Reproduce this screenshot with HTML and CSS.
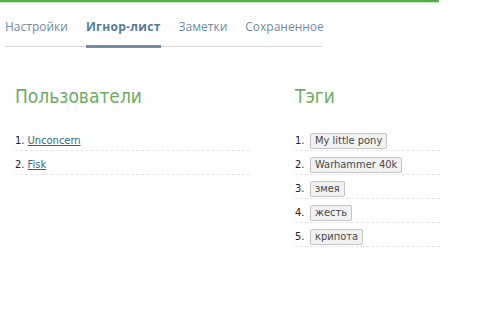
FILE: index.html
```html
<!DOCTYPE html>
<html lang="ru">
<head>
    <meta charset="UTF-8">
    <title>Игнор-лист</title>
    <link rel="stylesheet" href="styles.css">
</head>
<body>
    <div class="topbar"></div>
    <nav class="tabs">
        <a href="#">Настройки</a>
        <a href="#" class="active">Игнор-лист</a>
        <a href="#">Заметки</a>
        <a href="#">Сохраненное</a>
    </nav>

    <div class="columns">
        <div class="users">
            <h2>Пользователи</h2>
            <ol>
                <li><a href="#">Unconcern</a></li>
                <li><a href="#">Fisk</a></li>
            </ol>
        </div>
        <div class="tags">
            <h2>Тэги</h2>
            <ol>
                <li><span class="tag">My little pony</span></li>
                <li><span class="tag">Warhammer 40k</span></li>
                <li><span class="tag">змея</span></li>
                <li><span class="tag">жесть</span></li>
                <li><span class="tag">крипота</span></li>
            </ol>
        </div>
    </div>
</body>
</html>
```

FILE: styles.css
```css
body {
    margin: 0;
    background: #fff;
    font-family: "DejaVu Sans Condensed", "DejaVu Sans", sans-serif;
}

.topbar {
    width: 439px;
    height: 2px;
    background: #5aa552;
    border-bottom: 1px solid #c8e6c2;
}

.tabs {
    display: flex;
    gap: 18px;
    width: 317px;
    margin: 15px 0 0 5px;
    border-bottom: 1px solid #d6d6d6;
    font-family: "Open Sans", sans-serif;
    font-size: 12px;
    white-space: nowrap;
}

.tabs a {
    color: #6d8ca3;
    text-decoration: none;
    padding-bottom: 9px;
    line-height: 18px;
    border-bottom: 3px solid transparent;
    margin-bottom: -2px;
}

.tabs a.active {
    color: #557a96;
    font-weight: bold;
    letter-spacing: 0.3px;
    border-bottom-color: #6d8fa8;
}

.columns {
    display: flex;
    padding: 0 0 0 15px;
    margin-top: 36px;
}

.users {
    width: 235px;
}

.tags {
    width: 145px;
    margin-left: 45px;
}

h2 {
    margin: 0 0 18px;
    font-weight: normal;
    font-size: 19px;
    line-height: 26px;
    color: #6aad66;
}

ol {
    margin: 0;
    padding: 0;
    list-style: none;
    counter-reset: item;
    font-size: 11px;
}

li {
    counter-increment: item;
    height: 19px;
    padding-top: 4px;
    line-height: 19px;
    border-bottom: 1px dashed #e6e6e6;
    color: #222;
}

li::before {
    content: counter(item) ". ";
}

.tags li::before {
    display: inline-block;
    width: 15px;
}

li a {
    color: #2d6b8a;
}

.tag {
    display: inline-block;
    padding: 0 4px;
    line-height: 14px;
    border: 1px solid #c4c4c4;
    border-radius: 2px;
    background: #f1f1f1;
    color: #4a4a4a;
}
```
